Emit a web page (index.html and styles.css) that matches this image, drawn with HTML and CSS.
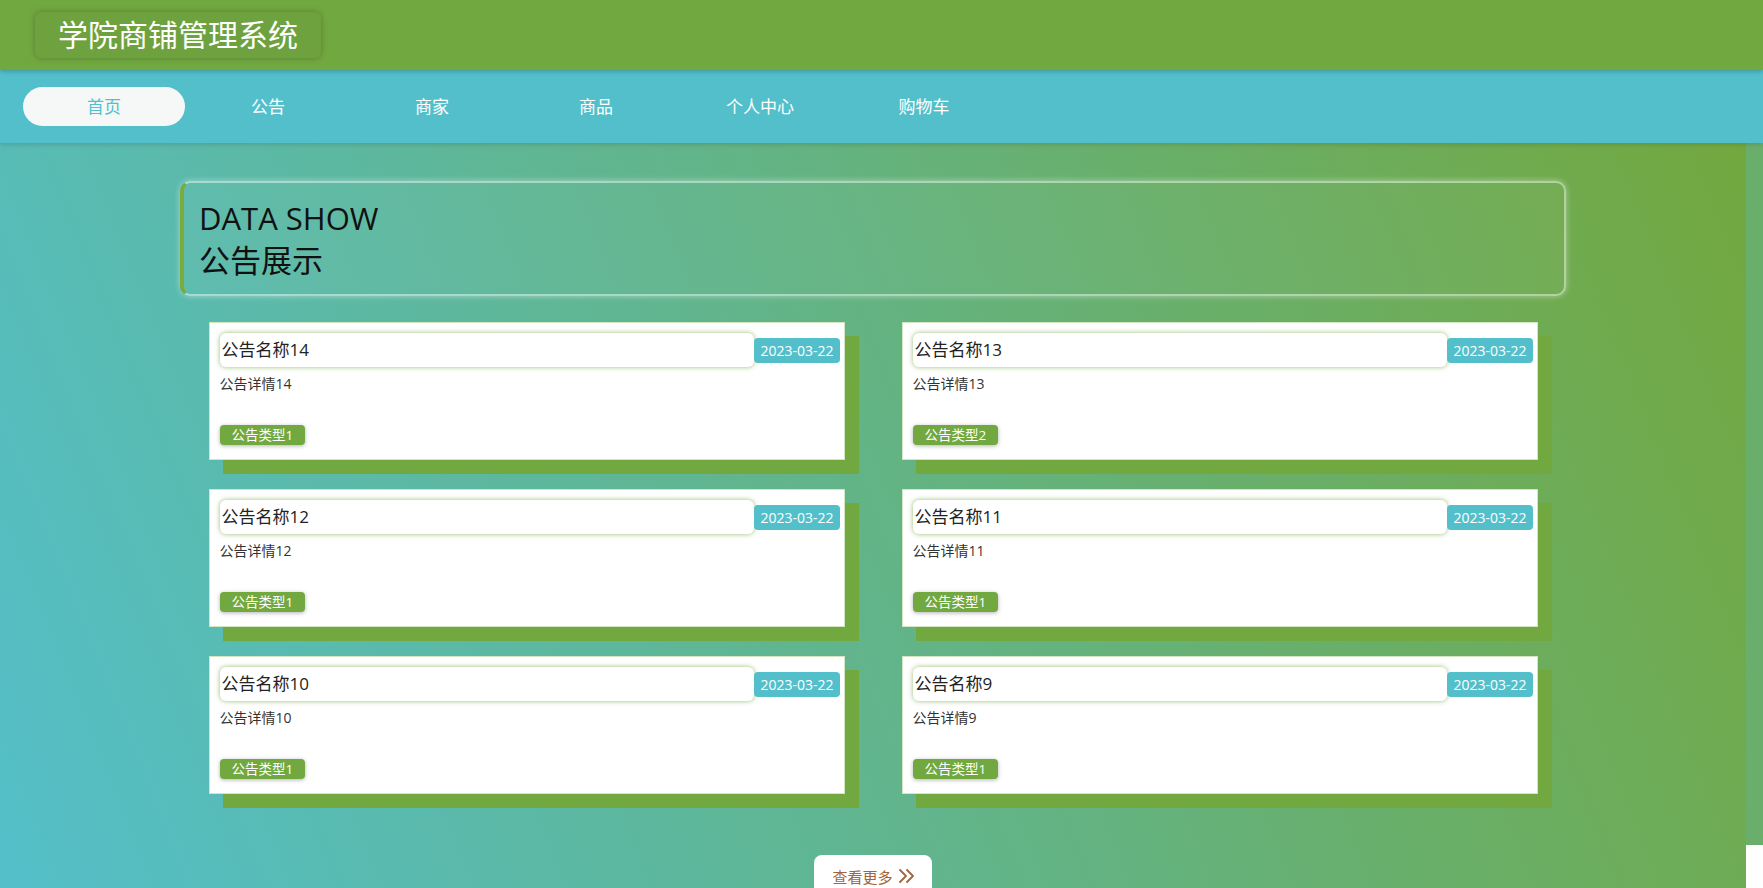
FILE: index.html
```html
<!DOCTYPE html>
<html lang="zh-CN">
<head>
<meta charset="utf-8">
<title>学院商铺管理系统</title>
<link rel="stylesheet" href="styles.css">
</head>
<body>
<header class="topbar">
  <div class="brand">学院商铺管理系统</div>
</header>
<nav class="menu">
  <a class="menu-item active">首页</a>
  <a class="menu-item">公告</a>
  <a class="menu-item">商家</a>
  <a class="menu-item">商品</a>
  <a class="menu-item">个人中心</a>
  <a class="menu-item">购物车</a>
</nav>
<div class="page-body">
  <main class="content">
    <section class="section-head">
      <div class="en">DATA SHOW</div>
      <div class="cn">公告展示</div>
    </section>
    <div class="notice-grid">
      <div class="card">
        <div class="card-top"><div class="title">公告名称14</div><div class="date">2023-03-22</div></div>
        <div class="detail">公告详情14</div>
        <span class="tag">公告类型1</span>
      </div>
      <div class="card">
        <div class="card-top"><div class="title">公告名称13</div><div class="date">2023-03-22</div></div>
        <div class="detail">公告详情13</div>
        <span class="tag">公告类型2</span>
      </div>
      <div class="card">
        <div class="card-top"><div class="title">公告名称12</div><div class="date">2023-03-22</div></div>
        <div class="detail">公告详情12</div>
        <span class="tag">公告类型1</span>
      </div>
      <div class="card">
        <div class="card-top"><div class="title">公告名称11</div><div class="date">2023-03-22</div></div>
        <div class="detail">公告详情11</div>
        <span class="tag">公告类型1</span>
      </div>
      <div class="card">
        <div class="card-top"><div class="title">公告名称10</div><div class="date">2023-03-22</div></div>
        <div class="detail">公告详情10</div>
        <span class="tag">公告类型1</span>
      </div>
      <div class="card">
        <div class="card-top"><div class="title">公告名称9</div><div class="date">2023-03-22</div></div>
        <div class="detail">公告详情9</div>
        <span class="tag">公告类型1</span>
      </div>
    </div>
    <div class="more-wrap">
      <a class="more">查看更多
        <svg class="chev" width="18" height="16" viewBox="0 0 18 16" fill="none" stroke="currentColor" stroke-width="1.8" stroke-linecap="round" stroke-linejoin="round"><path d="M2 2 L8 8 L2 14 M9 2 L15 8 L9 14"/></svg>
      </a>
    </div>
  </main>
  <div class="edge"></div>
</div>
</body>
</html>
```
FILE: styles.css
```css
html, body {
  margin: 0;
  padding: 0;
  overflow: hidden;
}
body {
  font-family: "Open Sans", "Noto Sans CJK SC", sans-serif;
  color: #222;
}
.topbar {
  position: relative;
  z-index: 2;
  height: 70px;
  box-sizing: border-box;
  padding: 12px 0 0 35px;
  background: #72a840;
  box-shadow: 0 2px 4px rgba(0, 0, 0, 0.18);
}
.brand {
  display: inline-block;
  height: 46px;
  line-height: 46px;
  padding: 0 23px;
  font-size: 30px;
  color: #fff;
  background: #6ea23e;
  border-radius: 6px;
  box-shadow: 0 0 6px rgba(0, 0, 0, 0.25);
}
.menu {
  position: relative;
  z-index: 1;
  height: 73px;
  box-sizing: border-box;
  display: flex;
  align-items: center;
  gap: 2px;
  padding-left: 23px;
  background: #53bfcb;
  box-shadow: 0 2px 4px rgba(0, 0, 0, 0.12);
}
.menu-item {
  width: 162px;
  height: 39px;
  line-height: 39px;
  text-align: center;
  font-size: 17px;
  color: #fff;
  border-radius: 20px;
}
.menu-item.active {
  background: #f6f8f8;
  color: #53bfcb;
}
.page-body {
  display: flex;
}
.content {
  flex: 1;
  min-height: 780px;
  padding-top: 38px;
  background: linear-gradient(68deg, #53bfcb 0%, #62b488 50%, #73a83f 100%);
}
.edge {
  flex: none;
  width: 17px;
  background: linear-gradient(#6aae6b 702px, #fff 702px);
}
.section-head {
  width: 1386px;
  height: 115px;
  box-sizing: border-box;
  margin: 0 auto;
  padding: 14px 15px;
  border: 2px solid rgba(255, 255, 255, 0.45);
  border-left: 4px solid #7aab3c;
  border-radius: 10px;
  box-shadow: 0 0 6px rgba(255, 255, 255, 0.45);
  background: rgba(255, 255, 255, 0.03);
  font-size: 31px;
  line-height: 42px;
  color: #111;
}
.notice-grid {
  width: 1329px;
  margin: 26px auto 0;
  display: grid;
  grid-template-columns: 636px 636px;
  column-gap: 57px;
  row-gap: 29px;
}
.card {
  background: #fff;
  border: 1px solid #d3e6c2;
  box-shadow: 14px 14px 0 #72a840;
  padding: 10px 4px 14px 10px;
}
.card-top {
  display: flex;
  align-items: center;
}
.title {
  flex: 1;
  height: 34px;
  line-height: 34px;
  padding-left: 2px;
  font-size: 17px;
  color: #222;
  background: #fff;
  border-radius: 6px;
  box-shadow: 0 0 5px rgba(114, 168, 64, 0.75);
}
.date {
  height: 25px;
  line-height: 25px;
  padding: 0 6px;
  font-size: 14px;
  color: #fff;
  background: #53bfcb;
  border-radius: 4px;
}
.detail {
  margin-top: 7px;
  font-size: 14px;
  line-height: 20px;
  color: #333;
}
.tag {
  display: inline-block;
  margin-top: 31px;
  height: 20px;
  line-height: 20px;
  padding: 0 12px;
  font-size: 13.5px;
  color: #fff;
  background: #72a840;
  border-radius: 4px;
  box-shadow: 0 1px 4px rgba(0, 0, 0, 0.3);
}
.more-wrap {
  margin-top: 61px;
  text-align: center;
}
.more {
  display: inline-flex;
  align-items: center;
  gap: 5px;
  height: 42px;
  padding: 0 16px 0 18px;
  font-size: 15px;
  color: #a4643c;
  background: #fff;
  border-radius: 8px;
}
.chev {
  display: block;
}
```
